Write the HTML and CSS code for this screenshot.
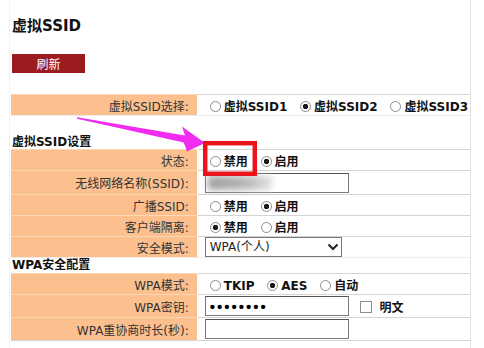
FILE: index.html
```html
<!DOCTYPE html>
<html lang="zh-CN">
<head>
  <meta charset="UTF-8" />
  <meta name="viewport" content="width=device-width, initial-scale=1.0"/>
  <title>虚拟SSID</title>
  <link rel="stylesheet" href="styles.css">
</head>
<body>
  <div class="page">
    <h2 class="title">虚拟SSID</h2>
    <button class="refresh" type="button">刷新</button>

    <table class="cfg">
      <tr>
        <td class="lbl">虚拟SSID选择:</td>
        <td class="val">
          <label class="opt"><input type="radio" name="vap">虚拟SSID1</label>
          <label class="opt"><input type="radio" name="vap" checked>虚拟SSID2</label>
          <label class="opt"><input type="radio" name="vap">虚拟SSID3</label>
        </td>
      </tr>
      <tr class="sec first">
        <td colspan="2">虚拟SSID设置</td>
      </tr>
      <tr>
        <td class="lbl">状态:</td>
        <td class="val">
          <label class="opt"><input type="radio" name="state">禁用</label>
          <label class="opt"><input type="radio" name="state" checked>启用</label>
        </td>
      </tr>
      <tr class="tall">
        <td class="lbl">无线网络名称(SSID):</td>
        <td class="val">
          <span class="ssid">
            <input type="text" class="field">
            <span class="smudge"></span>
          </span>
        </td>
      </tr>
      <tr>
        <td class="lbl">广播SSID:</td>
        <td class="val">
          <label class="opt"><input type="radio" name="bcast">禁用</label>
          <label class="opt"><input type="radio" name="bcast" checked>启用</label>
        </td>
      </tr>
      <tr>
        <td class="lbl">客户端隔离:</td>
        <td class="val">
          <label class="opt"><input type="radio" name="isolate" checked>禁用</label>
          <label class="opt"><input type="radio" name="isolate">启用</label>
        </td>
      </tr>
      <tr>
        <td class="lbl">安全模式:</td>
        <td class="val">
          <span class="pick">
            <select class="mode">
              <option>WPA(个人)</option>
            </select>
            <svg class="chev" width="12" height="8" viewBox="0 0 12 8"><polyline points="1.5,1.5 6,6 10.5,1.5" fill="none" stroke="#222" stroke-width="2"/></svg>
          </span>
        </td>
      </tr>
      <tr class="sec">
        <td colspan="2">WPA安全配置</td>
      </tr>
      <tr>
        <td class="lbl">WPA模式:</td>
        <td class="val">
          <label class="opt"><input type="radio" name="cipher">TKIP</label>
          <label class="opt"><input type="radio" name="cipher" checked>AES</label>
          <label class="opt"><input type="radio" name="cipher">自动</label>
        </td>
      </tr>
      <tr class="tall">
        <td class="lbl">WPA密钥:</td>
        <td class="val">
          <input type="password" class="field" value="12345678">
          <label class="plain"><input type="checkbox">明文</label>
        </td>
      </tr>
      <tr class="tall last">
        <td class="lbl">WPA重协商时长(秒):</td>
        <td class="val"><input type="text" class="field"></td>
      </tr>
    </table>
  </div>

  <!-- annotation drawn on top of the screenshot -->
  <svg class="marks" width="484" height="348" viewBox="0 0 484 348">
    <polygon points="77,117.3 185,135.6 182,126.5 205,143 187,151.5 183.8,142.4 77,118.7" fill="#ef2cef"/>
    <rect x="205.2" y="143.2" width="49.6" height="30.6" fill="none" stroke="#e8151d" stroke-width="4.5"/>
  </svg>
</body>
</html>
```

FILE: styles.css
```css
body {
  margin: 0;
  background: #fff;
  font-family: 'DejaVu Sans', 'Noto Sans CJK SC', sans-serif;
  font-size: 12px;
  color: #111;
}

.page {
  margin-left: 9px;
  width: 462px;
  height: 348px;
  padding-left: 1px;
  border-left: 1px solid #f2f2f2;
  border-right: 1px solid #e2e2e2;
  box-sizing: border-box;
  overflow: hidden;
}

.title {
  margin: 17px 0 0 1px;
  font-size: 15px;
  line-height: 18px;
  font-weight: bold;
}

.refresh {
  display: block;
  margin: 19px 0 0 1px;
  width: 73px;
  height: 19px;
  padding: 0;
  border: none;
  background-color: #9c1b1f;
  color: white;
  font-family: 'Noto Sans CJK SC', sans-serif;
  font-size: 12px;
  line-height: 19px;
}

.cfg {
  margin-top: 21px;
  width: 461px;
  border-collapse: separate;
  border-spacing: 0;
}

.cfg td {
  box-sizing: border-box;
  height: 21px;
  padding: 0;
  border-top: 1px solid #d4d4d4;
  vertical-align: middle;
  white-space: nowrap;
}

.cfg .lbl {
  width: 189px;
  padding-right: 8px;
  background-color: #fcc08f;
  border-top-color: #fdd6b4;
  border-right: 1px solid #fff;
  text-align: right;
  color: #333;
}

.cfg .val {
  padding-left: 7px;
}

.cfg .tall td {
  height: 23px;
}

.cfg tr:nth-child(4) td {
  height: 24px;
}

.cfg .last td {
  border-bottom: 1px solid #d4d4d4;
  height: 24px;
}

.cfg .sec td {
  height: 16px;
  padding: 0 0 1px 1px;
  border-top-color: #ececec;
  font-weight: bold;
  vertical-align: bottom;
  line-height: 14px;
}

.cfg .sec.first td {
  height: 34px;
  padding-bottom: 0;
}

.opt {
  font-weight: bold;
  margin-right: 4px;
}

.opt input {
  appearance: none;
  box-sizing: border-box;
  width: 11px;
  height: 11px;
  margin: 0 3px 0 5px;
  border: 1px solid #8c8c8c;
  border-radius: 50%;
  background: #fff;
  vertical-align: -1px;
}

.opt input:checked {
  background: radial-gradient(circle, #1a1a1a 0 2.4px, #fff 3px);
}

.field {
  box-sizing: border-box;
  width: 144px;
  height: 20px;
  margin: 0;
  padding: 0 4px;
  border: 1px solid #7a7a7a;
  border-top-color: #555;
  font-size: 12px;
  vertical-align: middle;
}

input[type="password"].field {
  font-size: 15px;
  font-weight: bold;
  letter-spacing: 2px;
  color: #000;
}

.ssid {
  position: relative;
  display: inline-block;
  vertical-align: middle;
}

.ssid .field {
  display: block;
}

.smudge {
  position: absolute;
  left: 3px;
  top: 3px;
  width: 64px;
  height: 14px;
  background: linear-gradient(90deg, #a0a0a0, #b4b4b4 55%, #e2e2e2);
  filter: blur(3px);
}

.pick {
  position: relative;
  display: inline-block;
  vertical-align: middle;
}

.mode {
  appearance: none;
  display: block;
  box-sizing: border-box;
  width: 137px;
  height: 20px;
  margin: 0;
  padding: 0 0 0 4px;
  border: 1px solid #777;
  border-radius: 0;
  background: #fff;
  font-family: 'DejaVu Sans', 'Noto Sans CJK SC', sans-serif;
  font-size: 12px;
  color: #222;
}

.chev {
  position: absolute;
  right: 3px;
  top: 6px;
  pointer-events: none;
}

.plain {
  font-weight: bold;
  vertical-align: middle;
}

.plain input {
  appearance: none;
  box-sizing: border-box;
  width: 12px;
  height: 12px;
  margin: 0 8px 0 7px;
  border: 1px solid #8c8c8c;
  background: #fff;
  vertical-align: -1px;
}

.marks {
  position: absolute;
  left: 0;
  top: 0;
  pointer-events: none;
}
```
